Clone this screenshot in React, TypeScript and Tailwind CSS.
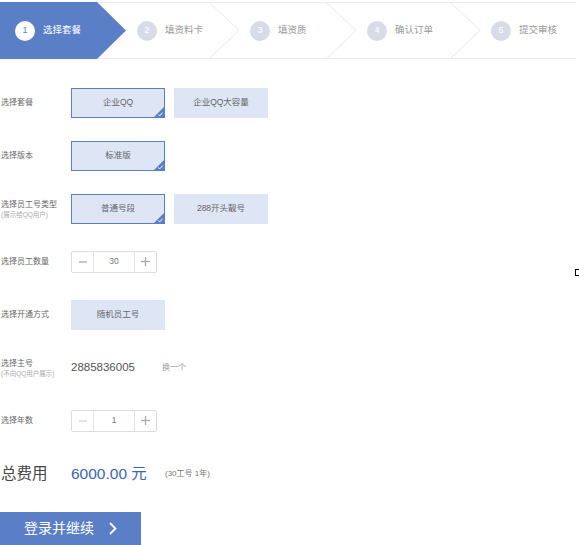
import { useState } from "react";

const font = "font-['Liberation_Sans','Noto_Sans_CJK_SC',sans-serif]";

const steps = [
  { n: 1, label: "选择套餐", w: "w-[97px]" },
  { n: 2, label: "填资料卡", w: "w-[113px]" },
  { n: 3, label: "填资质", w: "w-[117px]" },
  { n: 4, label: "确认订单", w: "w-[124px]" },
  { n: 5, label: "提交审核", w: "flex-1" },
];

function StepBar() {
  return (
    <div className="mt-[2px] flex h-[57px] w-[576px] border-y border-[#ececec]">
      {steps.map((s, i) => {
        const active = i === 0;
        return (
          <div
            key={s.n}
            className={`relative flex items-center gap-[8px] ${s.w} ${i === 0 ? "pl-[15px]" : "pl-[40px]"} ${
              active ? "-my-px bg-[#5a7fc7]" : ""
            }`}
          >
            <span
              className={`flex h-[20px] w-[20px] shrink-0 items-center justify-center rounded-full text-[9px] ${
                active ? "bg-white text-[#5a7fc7]" : "bg-[#d9dce8] text-white"
              }`}
            >
              {s.n}
            </span>
            <span className={`whitespace-nowrap text-[9.5px] ${active ? "text-white" : "text-[#999]"}`}>
              {s.label}
            </span>
            {i < 4 && (
              <svg
                className="absolute left-full top-0 z-10 h-full w-[30px]"
                viewBox="0 0 30 58"
                preserveAspectRatio="none"
              >
                {active ? (
                  <polygon points="0,0 29,29 0,58" fill="#5a7fc7" />
                ) : (
                  <polyline points="0,0 29,29 0,58" fill="none" stroke="#e8e8e8" strokeWidth="1" />
                )}
              </svg>
            )}
          </div>
        );
      })}
    </div>
  );
}

function Option({ text, selected }: { text: string; selected?: boolean }) {
  return (
    <div
      className={`relative flex h-[30px] w-[94px] items-center justify-center bg-[#dee5f4] text-[8.5px] text-[#666] ${
        selected ? "border border-[#5a7fc7]" : ""
      }`}
    >
      {text}
      {selected && (
        <svg className="absolute bottom-0 right-0 h-[10px] w-[10px]" viewBox="0 0 10 10">
          <polygon points="10,0 10,10 0,10" fill="#5a7fc7" />
          <polyline points="4.2,7.6 5.8,8.8 8.6,5.6" fill="none" stroke="white" strokeWidth="1" />
        </svg>
      )}
    </div>
  );
}

function Counter({ value, min }: { value: number; min?: boolean }) {
  return (
    <div className="flex h-[22px] w-[86px] rounded-[2px] border border-[#dcdcdc] bg-white text-[#aaa]">
      <button className={`flex w-[22px] items-center justify-center border-r border-[#e4e4e4] ${min ? "text-[#d4d4d4]" : ""}`}>
        <svg width="8" height="8" viewBox="0 0 8 8">
          <line x1="0" y1="4" x2="8" y2="4" stroke="currentColor" strokeWidth="1.3" />
        </svg>
      </button>
      <span className="flex flex-1 items-center justify-center text-[8.5px] text-[#777]">{value}</span>
      <button className="flex w-[22px] items-center justify-center border-l border-[#e4e4e4]">
        <svg width="9" height="9" viewBox="0 0 9 9">
          <line x1="0" y1="4.5" x2="9" y2="4.5" stroke="currentColor" strokeWidth="1.3" />
          <line x1="4.5" y1="0" x2="4.5" y2="9" stroke="currentColor" strokeWidth="1.3" />
        </svg>
      </button>
    </div>
  );
}

function Row({ label, sub, children }: { label: string; sub?: string; children: React.ReactNode }) {
  return (
    <div className="flex h-[53px] items-center">
      <div className="flex w-[71px] shrink-0 flex-col pl-[1px] text-[8px] leading-[11px] text-[#666]">
        <span>{label}</span>
        {sub && <span className="text-[6.5px] leading-[9px] text-[#aaa]">{sub}</span>}
      </div>
      {children}
    </div>
  );
}

export default function App() {
  const [staff] = useState(30);
  const [years] = useState(1);

  return (
    <div className={`relative h-[545px] w-[579px] overflow-hidden bg-white ${font}`}>
      <StepBar />
      <div className="pt-[17px]">
        <Row label="选择套餐">
          <div className="flex gap-[9px]">
            <Option text="企业QQ" selected />
            <Option text="企业QQ大容量" />
          </div>
        </Row>
        <Row label="选择版本">
          <Option text="标准版" selected />
        </Row>
        <Row label="选择员工号类型" sub="(展示给QQ用户)">
          <div className="flex gap-[9px]">
            <Option text="普通号段" selected />
            <Option text="288开头靓号" />
          </div>
        </Row>
        <Row label="选择员工数量">
          <Counter value={staff} />
        </Row>
        <Row label="选择开通方式">
          <Option text="随机员工号" />
        </Row>
        <Row label="选择主号" sub="(不向QQ用户展示)">
          <span className="w-[91px] text-[11.5px] text-[#555]">2885836005</span>
          <span className="text-[8px] text-[#999]">换一个</span>
        </Row>
        <Row label="选择年数">
          <Counter value={years} min />
        </Row>
        <div className="flex h-[53px] items-center">
          <span className="w-[71px] pl-[1px] text-[15.5px] text-[#444]">总费用</span>
          <span className="w-[94px] text-[15.5px] text-[#3d64b6]">6000.00 元</span>
          <span className="text-[8px] text-[#777]">(30工号 1年)</span>
        </div>
        <button className="mt-[12px] flex h-[40px] w-[141px] items-start bg-[#5a7fc7] pl-[24px] pt-[7px] text-white">
          <span className="text-[14px] leading-[18px]">登录并继续</span>
          <svg className="ml-[15px] mt-[3px]" width="8" height="13" viewBox="0 0 8 13">
            <polyline points="1,1 6.5,6.5 1,12" fill="none" stroke="white" strokeWidth="1.8" />
          </svg>
        </button>
      </div>
      <span className="absolute left-[575px] top-[269px] h-[7px] w-[6px] border border-black" />
    </div>
  );
}
